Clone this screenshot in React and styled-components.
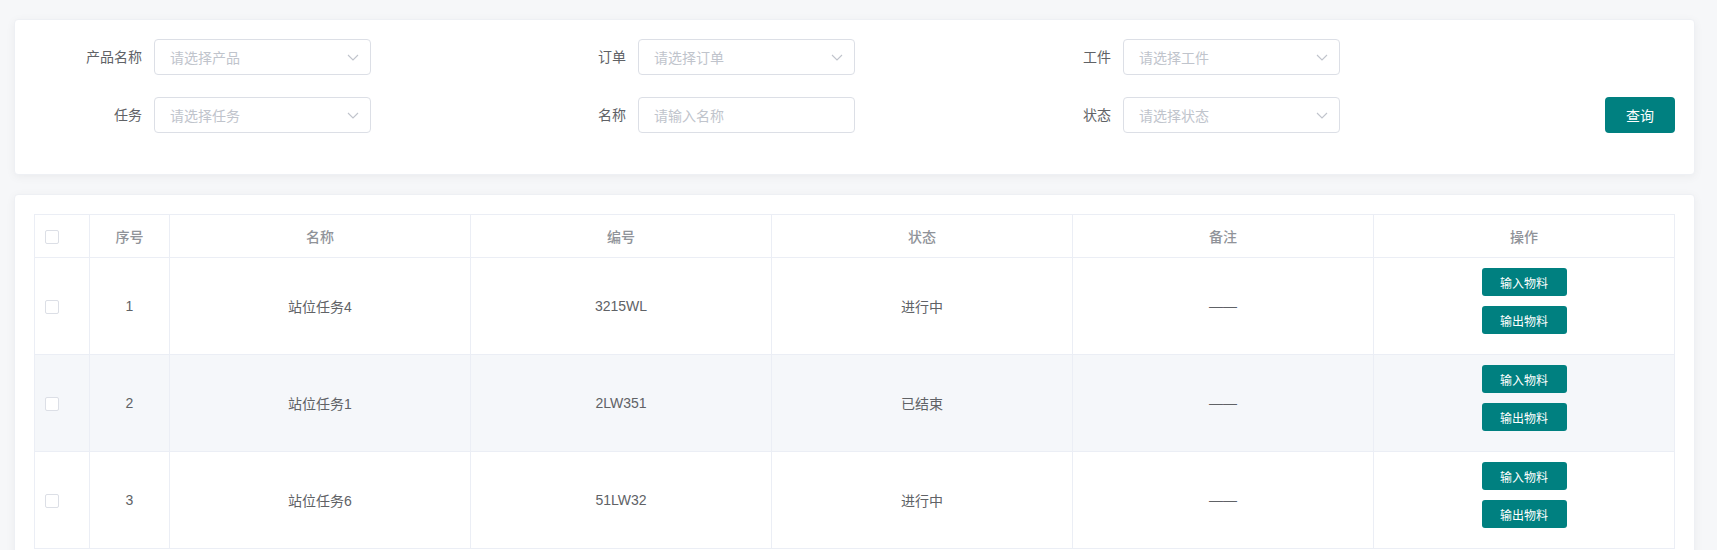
import React from "react";
import styled, {createGlobalStyle} from "styled-components";

const GlobalStyle = createGlobalStyle`
  * { box-sizing: border-box; }
  body {
    margin: 0;
    background: #f6f7f9;
    font-family: "Liberation Sans", "Noto Sans CJK SC", sans-serif;
    font-size: 14px;
    color: #606266;
  }
`

const Page = styled.div`
  padding: 19px 22px 0 14px;
  display: flex;
  flex-direction: column;
  gap: 19px;
`

const Card = styled.div`
  background: #fff;
  border: 1px solid #eef0f4;
  border-radius: 4px;
  box-shadow: 0 2px 10px rgba(0, 0, 0, 0.05);
  padding: ${p => p.$pad || "19px"};
`

const SearchForm = styled.div`
  display: grid;
  grid-template-columns: 484px 485px 1fr auto;
  row-gap: 22px;
  padding-bottom: 41px;
`

const FormItem = styled.div`
  display: flex;
  align-items: center;
  height: 36px;
`

const Label = styled.label`
  width: 120px;
  padding-right: 12px;
  text-align: right;
  color: #606266;
  font-size: 14px;
  line-height: 36px;
`

const Field = styled.div`
  position: relative;
  width: 217px;
  height: 36px;
  border: 1px solid #dcdfe6;
  border-radius: 4px;
  padding: 0 30px 0 15px;
  display: flex;
  align-items: center;
  color: #c0c4cc;
  font-size: 14px;
`

const Arrow = styled.svg`
  position: absolute;
  right: 11px;
  top: 14px;
`

const QueryButton = styled.button`
  grid-column: 4;
  width: 70px;
  height: 36px;
  border: none;
  border-radius: 4px;
  background: #008080;
  color: #fff;
  font-family: inherit;
  font-size: 14px;
  cursor: pointer;
`

const Table = styled.table`
  width: 100%;
  table-layout: fixed;
  border-collapse: separate;
  border-spacing: 0;
  border-top: 1px solid #ebeef5;
  border-left: 1px solid #ebeef5;
`

const Th = styled.th`
  height: 43px;
  padding: 0;
  border-right: 1px solid #ebeef5;
  border-bottom: 1px solid #ebeef5;
  color: #909399;
  font-weight: 500;
  font-size: 14px;
  text-align: ${p => (p.$left ? "left" : "center")};
  padding-left: ${p => (p.$left ? "10px" : "0")};
`

const Tr = styled.tr`
  background: ${p => (p.$striped ? "#f5f7fa" : "#fff")};
`

const Td = styled.td`
  padding: ${p => (p.$ops ? "10px 0" : "0")};
  padding-left: ${p => (p.$left ? "10px" : "0")};
  border-right: 1px solid #ebeef5;
  border-bottom: 1px solid #ebeef5;
  color: #606266;
  font-size: 14px;
  text-align: ${p => (p.$left ? "left" : "center")};
  vertical-align: middle;
`

const Checkbox = styled.span`
  display: inline-block;
  width: 14px;
  height: 14px;
  border: 1px solid #dcdfe6;
  border-radius: 2px;
  background: #fff;
  vertical-align: middle;
`

const OpButton = styled.button`
  display: block;
  width: 85px;
  height: 28px;
  margin: 0 auto 10px;
  border: none;
  border-radius: 3px;
  background: #008080;
  color: #fff;
  font-family: inherit;
  font-size: 12px;
  cursor: pointer;
`

const Chevron = () => (
    <Arrow width="12" height="7" viewBox="0 0 12 7">
        <path d="M1 1l5 5 5-5" fill="none" stroke="#c0c4cc" strokeWidth="1.1"/>
    </Arrow>
)

const Select = ({placeholder, arrow = true}) => (
    <Field>
        {placeholder}
        {arrow && <Chevron/>}
    </Field>
)

const filters = [
    {label: "产品名称", placeholder: "请选择产品"},
    {label: "订单", placeholder: "请选择订单"},
    {label: "工件", placeholder: "请选择工件"},
    {label: "任务", placeholder: "请选择任务"},
    {label: "名称", placeholder: "请输入名称", input: true},
    {label: "状态", placeholder: "请选择状态"},
]

const rows = [
    {id: 1, name: "站位任务4", code: "3215WL", state: "进行中"},
    {id: 2, name: "站位任务1", code: "2LW351", state: "已结束"},
    {id: 3, name: "站位任务6", code: "51LW32", state: "进行中"},
]

const App = () => {
    return <>
        <GlobalStyle/>
        <Page>
            <Card $pad="19px 19px 0">
                <SearchForm>
                    {filters.slice(0, 3).map(f =>
                        <FormItem key={f.label}>
                            <Label>{f.label}</Label>
                            <Select placeholder={f.placeholder} arrow={!f.input}/>
                        </FormItem>
                    )}
                    <div/>
                    {filters.slice(3).map(f =>
                        <FormItem key={f.label}>
                            <Label>{f.label}</Label>
                            <Select placeholder={f.placeholder} arrow={!f.input}/>
                        </FormItem>
                    )}
                    <QueryButton>查询</QueryButton>
                </SearchForm>
            </Card>

            <Card>
                <Table>
                    <colgroup>
                        <col style={{width: 55}}/>
                        <col style={{width: 80}}/>
                        <col/>
                        <col/>
                        <col/>
                        <col/>
                        <col/>
                    </colgroup>
                    <thead>
                    <tr>
                        <Th $left><Checkbox/></Th>
                        <Th>序号</Th>
                        <Th>名称</Th>
                        <Th>编号</Th>
                        <Th>状态</Th>
                        <Th>备注</Th>
                        <Th>操作</Th>
                    </tr>
                    </thead>
                    <tbody>
                    {rows.map((r, i) =>
                        <Tr key={r.id} $striped={i % 2 === 1}>
                            <Td $left><Checkbox/></Td>
                            <Td>{r.id}</Td>
                            <Td>{r.name}</Td>
                            <Td>{r.code}</Td>
                            <Td>{r.state}</Td>
                            <Td>——</Td>
                            <Td $ops>
                                <OpButton>输入物料</OpButton>
                                <OpButton>输出物料</OpButton>
                            </Td>
                        </Tr>
                    )}
                    </tbody>
                </Table>
            </Card>
        </Page>
    </>
}

export default App;
